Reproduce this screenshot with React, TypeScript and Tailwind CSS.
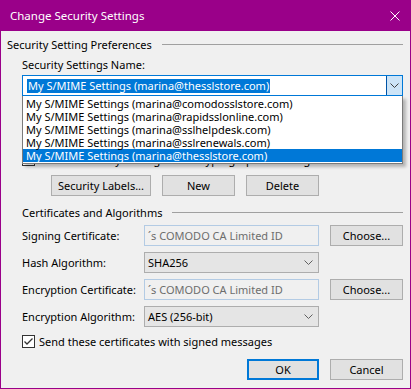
import React from 'react'

const font = { fontFamily: '"Noto Sans", "Open Sans", sans-serif' }

const profiles = [
  'My S/MIME Settings (marina@comodosslstore.com)',
  'My S/MIME Settings (marina@rapidsslonline.com)',
  'My S/MIME Settings (marina@sslhelpdesk.com)',
  'My S/MIME Settings (marina@sslrenewals.com)',
  'My S/MIME Settings (marina@thesslstore.com)',
]

function Chevron({ color = '#404040' }: { color?: string }) {
  return (
    <svg width="9" height="5" viewBox="0 0 9 5" className="block">
      <path d="M0.5 0.5 L4.5 4.5 L8.5 0.5" fill="none" stroke={color} strokeWidth="1" />
    </svg>
  )
}

function Check({ checked }: { checked?: boolean }) {
  return (
    <div className="flex h-[13px] w-[13px] shrink-0 items-center justify-center border border-[#333333] bg-white">
      {checked && (
        <svg width="11" height="11" viewBox="0 0 11 11">
          <path d="M1.5 5.5 L4 8 L9.5 2.5" fill="none" stroke="#333333" strokeWidth="1.3" />
        </svg>
      )}
    </div>
  )
}

function Btn({ label, w, primary }: { label: string; w: string; primary?: boolean }) {
  return (
    <div
      className={`flex h-[21px] items-center justify-center bg-[#e1e1e1] text-[11px] leading-none text-black ${w} ${
        primary ? 'border-2 border-[#0078d7]' : 'border border-[#adadad]'
      }`}
    >
      {label}
    </div>
  )
}

function GroupHeader({ title, indent }: { title: string; indent?: boolean }) {
  return (
    <div className={`flex h-[16px] items-center ${indent ? 'pl-[15px]' : ''}`}>
      <span className="whitespace-nowrap text-[11px] leading-none">{title}</span>
      <div className="ml-[10px] h-px flex-1 bg-[#a0a0a0]" />
    </div>
  )
}

function FieldRow({ label, children, button }: { label: string; children: React.ReactNode; button?: string }) {
  return (
    <div className="flex h-[21px] items-center pl-[15px]">
      <span className="w-[122px] whitespace-nowrap text-[11px] leading-none">{label}</span>
      {children}
      {button && (
        <div className="ml-[11px]">
          <Btn label={button} w="w-[73px]" />
        </div>
      )}
    </div>
  )
}

function ReadOnlyBox({ value }: { value: string }) {
  return (
    <div className="flex h-[21px] w-[175px] items-center border border-[#b3cbe4] bg-[#f0f0f0] pl-[3px] text-[11px] leading-none text-[#6d6d6d]">
      {value}
    </div>
  )
}

function Select({ value }: { value: string }) {
  return (
    <div className="flex h-[21px] w-[175px] items-center justify-between border border-[#adadad] bg-[#e5e5e5] pl-[3px] pr-[5px] text-[11px] leading-none">
      <span>{value}</span>
      <Chevron color="#606060" />
    </div>
  )
}

export default function App() {
  return (
    <div className="flex h-[389px] w-[411px] flex-col border-x border-b border-[#9a0089] text-black" style={font}>
      {/* Title bar */}
      <div className="-mx-px flex h-[31px] shrink-0 items-center justify-between bg-[#9a0089] pl-[10px] pr-[11px] text-white">
        <span className="text-[11.5px]">Change Security Settings</span>
        <svg width="10" height="10" viewBox="0 0 10 10">
          <path d="M0.5 0.5 L9.5 9.5 M9.5 0.5 L0.5 9.5" stroke="white" strokeWidth="1" />
        </svg>
      </div>

      <div className="relative flex-1 bg-[#f0f0f0] pl-[6px] pr-[7px]">
        <div className="mt-[5px]">
          <GroupHeader title="Security Setting Preferences" />
        </div>

        <div className="mt-[4px] flex h-[16px] items-center pl-[15px] text-[11px] leading-none">Security Settings Name:</div>

        {/* Combobox */}
        <div className="ml-[15px] mt-[3px] flex h-[21px] w-[381px] border border-[#0078d7] bg-white">
          <div className="flex flex-1 items-center pl-[4px]">
            <span className="bg-[#0078d7] px-px text-[11px] leading-[14px] text-white">{profiles[4]}</span>
          </div>
          <div className="flex w-[16px] items-center justify-center border-l border-[#0054a6] bg-[#cce4f7]">
            <Chevron />
          </div>
        </div>

        {/* Default checkbox (partly hidden by the open list) */}
        <div className="ml-[15px] mt-[56px] flex h-[15px] items-center gap-[4px] text-[11px] leading-none">
          <Check />
          <span className="whitespace-nowrap">Default Security Setting for all cryptographic messages</span>
        </div>

        <div className="ml-[44px] mt-[8px] flex gap-[11px]">
          <Btn label="Security Labels..." w="w-[100px]" />
          <Btn label="New" w="w-[73px]" />
          <Btn label="Delete" w="w-[73px]" />
        </div>

        <div className="mt-[8px]">
          <GroupHeader title="Certificates and Algorithms" indent />
        </div>

        <div className="mt-[5px] flex flex-col gap-[6px]">
          <FieldRow label="Signing Certificate:" button="Choose...">
            <ReadOnlyBox value="´s COMODO CA Limited ID" />
          </FieldRow>
          <FieldRow label="Hash Algorithm:">
            <Select value="SHA256" />
          </FieldRow>
          <FieldRow label="Encryption Certificate:" button="Choose...">
            <ReadOnlyBox value="´s COMODO CA Limited ID" />
          </FieldRow>
          <FieldRow label="Encryption Algorithm:">
            <Select value="AES (256-bit)" />
          </FieldRow>
        </div>

        <div className="ml-[15px] mt-[7px] flex h-[14px] items-center gap-[4px] text-[11px] leading-none">
          <Check checked />
          <span className="whitespace-nowrap">Send these certificates with signed messages</span>
        </div>

        <div className="mt-[11px] flex justify-end gap-[11px]">
          <Btn label="OK" w="w-[72px]" primary />
          <Btn label="Cancel" w="w-[73px]" />
        </div>

        {/* Open dropdown list */}
        <div className="absolute left-[21px] top-[65px] w-[381px] border border-t-0 border-[#7a7a7a] bg-white py-px shadow-[3px_3px_3px_rgba(0,0,0,0.25)]">
          {profiles.map((p, i) => (
            <div
              key={p}
              className={`flex h-[13px] items-center whitespace-nowrap pl-[3px] text-[11px] leading-[13px] ${
                i === 4 ? 'bg-[#0078d7] text-white' : ''
              }`}
            >
              {p}
            </div>
          ))}
        </div>
      </div>
    </div>
  )
}
